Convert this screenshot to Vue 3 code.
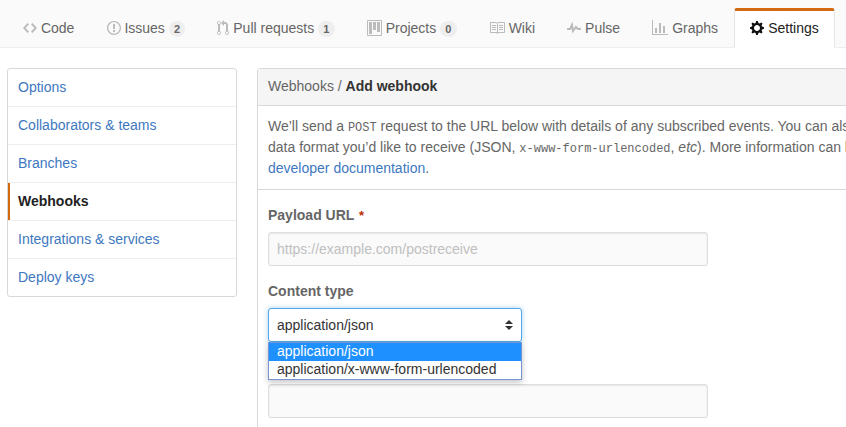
<script setup>
const tabs = [
  { label: 'Code', w: 14, d: 'M9.5 3L8 4.5 11.5 8 8 11.5 9.5 13 14 8 9.5 3zm-5 0L0 8l4.5 5L6 11.5 2.5 8 6 4.5 4.5 3z' },
  { label: 'Issues', count: 2, w: 14, d: 'M7 2.3c3.14 0 5.7 2.56 5.7 5.7s-2.56 5.7-5.7 5.7A5.71 5.71 0 0 1 1.3 8c0-3.14 2.56-5.7 5.7-5.7zM7 1C3.14 1 0 4.14 0 8s3.14 7 7 7 7-3.14 7-7-3.14-7-7-7zm1 3H6v5h2V4zm0 6H6v2h2v-2z' },
  { label: 'Pull requests', count: 1, w: 12, d: 'M11 11.28V5c-.03-.78-.34-1.47-.94-2.06C9.46 2.35 8.78 2.03 8 2H7V0L4 3l3 3V4h1c.27.02.48.11.69.31.21.2.3.42.31.69v6.28A1.993 1.993 0 0 0 10 15a1.993 1.993 0 0 0 1-3.72zm-1 2.92c-.66 0-1.2-.55-1.2-1.2 0-.65.55-1.2 1.2-1.2.65 0 1.2.55 1.2 1.2 0 .65-.55 1.2-1.2 1.2zM4 3c0-1.11-.89-2-2-2a1.993 1.993 0 0 0-1 3.72v6.56A1.993 1.993 0 0 0 2 15a1.993 1.993 0 0 0 1-3.72V4.72c.59-.34 1-.98 1-1.72zm-.8 10c0 .66-.55 1.2-1.2 1.2-.65 0-1.2-.55-1.2-1.2 0-.65.55-1.2 1.2-1.2.65 0 1.2.55 1.2 1.2zM2 4.2C1.34 4.2.8 3.65.8 3c0-.65.55-1.2 1.2-1.2.65 0 1.2.55 1.2 1.2 0 .65-.55 1.2-1.2 1.2z' },
  { label: 'Projects', count: 0, w: 15, d: 'M10 12h3V2h-3v10zm-4-2h3V2H6v8zm-4 4h3V2H2v12zm-1 1h13V1H1v14zM14 0H1a1 1 0 0 0-1 1v14a1 1 0 0 0 1 1h13a1 1 0 0 0 1-1V1a1 1 0 0 0-1-1z' },
  { label: 'Wiki', w: 16, d: 'M3 5h4v1H3V5zm0 3h4V7H3v1zm0 2h4V9H3v1zm11-5h-4v1h4V5zm0 2h-4v1h4V7zm0 2h-4v1h4V9zm2-6v9c0 .55-.45 1-1 1H9.5l-1 1-1-1H2c-.55 0-1-.45-1-1V3c0-.55.45-1 1-1h5.5l1 1 1-1H15c.55 0 1 .45 1 1zm-8 .5L7.5 3H2v9h6V3.5zm7-.5H9.5l-.5.5V12h6V3z' },
  { label: 'Pulse', w: 14, d: 'M11.5 8L8.8 5.4 6.6 8.5 5.5 1.6 2.38 8H0v2h3.6l.9-1.8.9 5.4L9 8.5l1.6 1.5H14V8h-2.5z' },
  { label: 'Graphs', w: 16, d: 'M16 14v1H0V0h1v14h15zM5 13H3V8h2v5zm4 0H7V3h2v10zm4 0h-2V6h2v7z' },
  { label: 'Settings', selected: true, w: 14, d: 'M14 8.77v-1.6l-1.94-.64-.45-1.09.88-1.84-1.13-1.13-1.81.91-1.09-.45-.69-1.92h-1.6l-.63 1.94-1.11.45-1.84-.88-1.13 1.13.91 1.81-.45 1.09L0 7.23v1.59l1.94.64.45 1.09-.88 1.84 1.13 1.13 1.81-.91 1.09.45.69 1.92h1.59l.63-1.94 1.11-.45 1.84.88 1.13-1.13-.92-1.81.47-1.09L14 8.75v.02zM7 11c-1.66 0-3-1.34-3-3s1.34-3 3-3 3 1.34 3 3-1.34 3-3 3z' },
]
const menu = ['Options', 'Collaborators & teams', 'Branches', 'Webhooks', 'Integrations & services', 'Deploy keys']
const types = ['application/json', 'application/x-www-form-urlencoded']
</script>

<template>
  <div class="page">
    <nav class="tabs">
      <a v-for="t in tabs" :key="t.label" class="tab" :class="{ selected: t.selected }">
        <svg class="octicon" :width="t.w" height="16" :viewBox="`0 0 ${t.w} 16`"><path fill-rule="evenodd" :d="t.d" /></svg>
        {{ ' ' }}<span>{{ t.label }}</span>
        <template v-if="t.count !== undefined">{{ ' ' }}<span class="counter">{{ t.count }}</span></template>
      </a>
    </nav>
    <main class="content">
      <aside class="menu">
        <a v-for="m in menu" :key="m" class="menu-item" :class="{ current: m === 'Webhooks' }">{{ m }}</a>
      </aside>
      <section class="panel">
        <header class="panel-head">Webhooks / <strong>Add webhook</strong></header>
        <p class="intro">
          We’ll send a <code>POST</code> request to the URL below with details of any subscribed events. You can also<br>
          data format you’d like to receive (JSON, <code>x-www-form-urlencoded</code>, <em>etc</em>). More information can be<br>
          <a class="link">developer documentation</a>.
        </p>
        <form class="form">
          <div class="group">
            <label class="label">Payload URL <span class="required">*</span></label>
            <input class="input" type="text" placeholder="https://example.com/postreceive">
          </div>
          <div class="group">
            <label class="label">Content type</label>
            <div class="select">
              <span>{{ types[0] }}</span>
              <svg class="arrows" width="8" height="10" viewBox="0 0 8 10"><path d="M4 0L8 4H0zM0 6h8L4 10z" /></svg>
              <ul class="options">
                <li v-for="(t, i) in types" :key="t" :class="{ active: i === 0 }">{{ t }}</li>
              </ul>
            </div>
          </div>
          <div class="group secret">
            <input class="input" type="text">
          </div>
        </form>
      </section>
    </main>
  </div>
</template>

<style>
body {
  margin: 0;
  background: #fff;
}
</style>

<style scoped>
.page {
  box-sizing: border-box;
  width: 100%;
  height: 427px;
  overflow: hidden;
  font: 14px/21px "Liberation Sans", Arial, sans-serif;
  color: #666;
}
.tabs {
  display: flex;
  box-sizing: border-box;
  height: 48px;
  padding: 8px 0 0 7px;
  background: #fafafa;
  border-bottom: 1px solid #eee;
}
.tab {
  flex: none;
  box-sizing: border-box;
  height: 40px;
  padding: 7px 15px 8px;
  border: solid transparent;
  border-width: 3px 1px 1px;
  border-radius: 3px 3px 0 0;
  white-space: nowrap;
}
.tab + .tab {
  margin-left: 0.15px;
}
.tab.selected {
  color: #222;
  background: #fff;
  border-color: #d26911 #e5e5e5 transparent;
}
.octicon {
  display: inline-block;
  vertical-align: text-top;
  fill: #bbb;
}
.selected .octicon {
  fill: #111;
}
.counter {
  display: inline-block;
  padding: 3px 5.2px 2px;
  font-size: 11px;
  font-weight: bold;
  line-height: 11px;
  vertical-align: 0;
  background: #eee;
  border-radius: 20px;
}
.content {
  display: flex;
  gap: 20px;
  padding: 20px 0 0 7px;
}
.menu {
  flex: none;
  box-sizing: border-box;
  width: 230px;
  height: 229px;
  border: 1px solid #d8d8d8;
  border-radius: 3px;
}
.menu-item {
  display: block;
  box-sizing: border-box;
  height: 38px;
  padding: 8px 10px;
  color: #4078c0;
  border-bottom: 1px solid #eee;
}
.menu-item:last-child {
  border-bottom: 0;
}
.menu-item.current {
  font-weight: bold;
  color: #222;
  background: linear-gradient(#d26911, #d26911) left / 2px 100% no-repeat;
}
.panel {
  flex: none;
  box-sizing: border-box;
  width: 730px;
  height: 420px;
  border: 1px solid #d8d8d8;
  border-radius: 3px;
}
.panel-head {
  box-sizing: border-box;
  height: 37px;
  padding: 7px 10px 8px;
  background: #f5f5f5;
  border-bottom: 1px solid #d8d8d8;
}
.panel-head strong {
  color: #333;
}
.intro {
  margin: 0;
  padding: 10px;
  white-space: nowrap;
  border-bottom: 1px solid #d8d8d8;
}
code {
  font: 12px "Liberation Mono", monospace;
}
.link {
  color: #4078c0;
}
.form {
  padding: 0 10px;
}
.group {
  margin: 15px 0;
}
.group.secret {
  margin-top: 42px;
}
.label {
  display: block;
  margin-bottom: 6px;
  font-weight: bold;
}
.required {
  margin-left: 1px;
  font-size: 13px;
  line-height: 1;
  color: #bd2c00;
}
.input {
  display: block;
  box-sizing: border-box;
  width: 440px;
  height: 34px;
  padding: 7px 8px;
  font: inherit;
  background: #fafafa;
  border: 1px solid #ddd;
  border-radius: 3px;
  box-shadow: inset 0 1px 2px rgba(0, 0, 0, 0.075);
}
.input::placeholder {
  color: #c0c0c0;
  opacity: 1;
}
.select {
  position: relative;
  display: flex;
  align-items: center;
  justify-content: space-between;
  box-sizing: border-box;
  width: 254px;
  height: 34px;
  padding: 0 8px;
  color: #333;
  background: #fff;
  border: 1px solid #51a7e8;
  border-radius: 3px;
  box-shadow: 0 0 5px rgba(81, 167, 232, 0.5);
}
.arrows {
  fill: #333;
}
.options {
  position: absolute;
  z-index: 1;
  top: 33px;
  left: -1px;
  box-sizing: border-box;
  width: 254px;
  margin: 0;
  padding: 0;
  list-style: none;
  line-height: 16px;
  background: #fff;
  border: 1px solid #7693d4;
  box-shadow: 0 2px 6px rgba(0, 0, 0, 0.25);
}
.options li {
  height: 18px;
  padding-left: 8px;
}
.options .active {
  color: #fff;
  background: #1e90ff;
}
</style>
